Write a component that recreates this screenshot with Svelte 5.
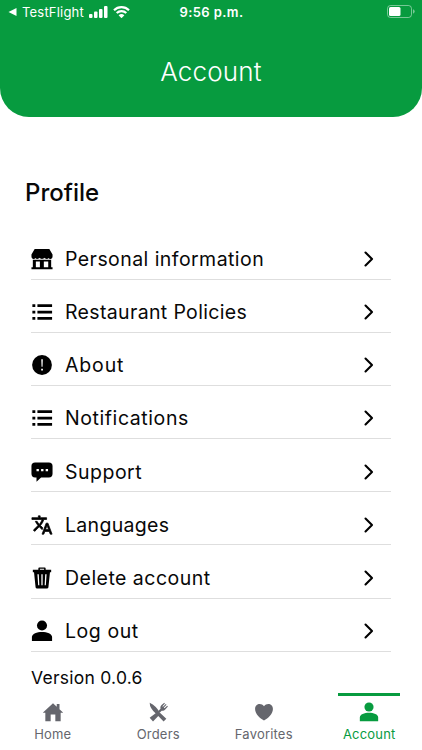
<script>
	let items = [
		{ label: "Personal information", icon: "store", spacing: 0.44 },
		{ label: "Restaurant Policies", icon: "list", spacing: 0.35 },
		{ label: "About", icon: "alert", spacing: 0.85 },
		{ label: "Notifications", icon: "list", spacing: 0.58 },
		{ label: "Support", icon: "chat", spacing: 0.5 },
		{ label: "Languages", icon: "translate", spacing: 0.3 },
		{ label: "Delete account", icon: "trash", spacing: 0.47 },
		{ label: "Log out", icon: "person", spacing: 0.56 }
	];

	let tabs = [
		{ label: "Home", icon: "home" },
		{ label: "Orders", icon: "orders" },
		{ label: "Favorites", icon: "heart" },
		{ label: "Account", icon: "person" }
	];

	let active = "Account";
</script>

{#snippet icon(name)}
	<svg viewBox="0 0 24 24" fill="currentColor">
		{#if name == "store"}
			<path d="M4 1h16l3.500 6v2.200c0 1.400-1 2.800-2.200 2.800-1 0-1.600-.5-2-1.200-.5.8-1.300 1.200-2.200 1.200-1.100 0-1.900-.5-2.400-1.300-.5.8-1.400 1.300-2.700 1.300s-2.200-.5-2.700-1.300c-.5.8-1.300 1.300-2.400 1.300-.9 0-1.700-.4-2.200-1.200-.4.7-1 1.200-2 1.200C1.500 12 .5 10.600.5 9.200V7z" />
			<path fill-rule="evenodd" d="M2 12.700h20V21h1.500v2.300H.5V21H2zM5.300 14.800V21h4.400v-6.200zm8.700 0V21h4.800v-6.200z" />
		{:else if name == "list"}
			<path d="M1.500 3.500h3.200v3H1.500zM7 3.500h16v3H7zM1.500 10.500h3.200v3H1.500zM7 10.500h16v3H7zM1.500 17.500h3.200v3H1.500zM7 17.500h16v3H7z" />
		{:else if name == "alert"}
			<circle cx="12" cy="12" r="10.800" />
			<path fill="#fff" d="M11.200 5.800h1.700l-.3 8h-1.100zM11.100 16h1.900v1.900h-1.900z" />
		{:else if name == "chat"}
			<path fill-rule="evenodd" d="M4.500 1.500h15A4 4 0 0 1 23.500 5.500V14a4 4 0 0 1-4 4H11l-5 4.700V18H4.500a4 4 0 0 1-4-4V5.500a4 4 0 0 1 4-4zM6 8.700v2.600h2.600V8.700zm5 0v2.600h2.600V8.700zm5 0v2.600h2.600V8.700z" />
		{:else if name == "translate"}
			<path d="M12.870 15.070l-2.540-2.510.030-.030A17.520 17.520 0 0 0 14.070 6H17V4h-7V2H8v2H1v2h11.170C11.500 7.920 10.440 9.750 9 11.350 8.070 10.320 7.300 9.190 6.690 8h-2c.73 1.630 1.730 3.170 2.980 4.560l-5.090 5.020L4 19l5-5 3.110 3.110zM18.500 10h-2L12 22h2l1.120-3h4.750L21 22h2zm-2.620 7l1.620-4.330L19.120 17z" stroke="currentColor" stroke-width=".8" />
		{:else if name == "trash"}
			<path fill-rule="evenodd" d="M8 3V1.500Q8 .5 9 .5h6q1 0 1 1V3h6v2.800h-1.300L19 22q-.1 1.500-1.700 1.500H6.700Q5.100 23.500 5 22L3.300 5.800H2V3zm1.700 0h4.600V2H9.700zM7 8l.8 12h1.300L8.500 8zm4.300 0v12h1.400V8zm4.200 0-.6 12h1.300L17 8z" />
		{:else if name == "person"}
			<circle cx="12" cy="6" r="5.500" />
			<path d="M1 23v-4.500C1 15 6.500 13 12 13s11 2 11 5.500V23z" />
		{:else if name == "home"}
			<path d="M12 1.500l4.500 4.200V2.500h3.300v6.300L24.500 13h-3.300v10h-6.400v-8H9.200v8H2.800V13H-.5z" />
		{:else if name == "orders"}
			<path d="M2 1q8 4 12 11.500l8 7.500-3.300 3.500L10 14.500Q2 8 2 1z" />
			<path d="M2 19l8.300-6.500 3.200 3.200L6 23.500z" />
			<path d="M12 11l3-2.800c-.4-2 .2-3.500 1.300-4.500L19.500 1l.8.700-3 3.300.7.700 3.400-3.200.8.800L19 6.700l.8.700L23 4.500l.9.800-3.500 4c-1.400 1.400-2.600 1.500-4 1.200L14 13z" />
		{:else if name == "heart"}
			<path d="M12 22.300C7 19 1.300 14.500 1.300 8.300 1.300 1.600 9 .5 12 5.200 15 .5 22.700 1.600 22.700 8.300c0 6.200-5.700 10.700-10.700 14z" />
		{/if}
	</svg>
{/snippet}

<main>
	<header>
		<div class="status">
			<div class="carrier">
				<svg class="back" viewBox="0 0 8 8"><path d="M8 0v8L0 4z" /></svg>
				<span>TestFlight</span>
				<svg class="signal" viewBox="0 0 19 12">
					<rect x="0" y="8" width="3.500" height="4" rx="1" />
					<rect x="5" y="5.500" width="3.500" height="6.500" rx="1" />
					<rect x="10" y="3" width="3.500" height="9" rx="1" />
					<rect x="15" y="0" width="3.500" height="12" rx="1" />
				</svg>
				<svg class="wifi" viewBox="0 0 17 12">
					<path d="M1 4.200a10.800 10.800 0 0 1 15 0M3.700 7a7 7 0 0 1 9.600 0" />
					<path class="dot" d="M5.600 9.300a4.300 4.300 0 0 1 5.800 0L8.500 12.200z" />
				</svg>
			</div>
			<div class="time">9:56 p.m.</div>
			<div class="power">
				<svg viewBox="0 0 28 13">
					<rect class="shell" x=".5" y=".5" width="24" height="12" rx="3" />
					<rect x="2" y="2" width="11.500" height="9" rx="1.500" />
					<path class="tip" d="M26 4.300q1.700.6 1.700 2.200T26 8.700z" />
				</svg>
			</div>
		</div>
		<h1>Account</h1>
	</header>

	<section>
		<h2>Profile</h2>
		<ul>
			{#each items as item}
				<li>
					<span class="icon">{@render icon(item.icon)}</span>
					<span class="label" style="letter-spacing: {item.spacing}px">{item.label}</span>
					<svg class="chevron" viewBox="0 0 10 16"><path d="M1.500 1.500 8 8l-6.500 6.500" /></svg>
				</li>
			{/each}
		</ul>
		<p>Version 0.0.6</p>
	</section>

	<nav>
		{#each tabs as tab}
			<div class="tab" class:active={tab.label == active}>
				<span class="tab-icon">{@render icon(tab.icon)}</span>
				<span>{tab.label}</span>
			</div>
		{/each}
	</nav>
</main>

<style>
	:global(body) {
		background: white;
	}

	main {
		display: flex;
		flex-direction: column;
		height: 750px;
		overflow: hidden;
		font-family: Inter, "Liberation Sans", sans-serif;
		color: #080808;
	}

	svg {
		display: block;
		width: 100%;
		height: 100%;
	}

	header {
		flex: none;
		height: 117px;
		border-radius: 0 0 29px 29px;
		background: #079b3f;
		color: white;
	}

	.status {
		display: grid;
		grid-template-columns: 1fr auto 1fr;
		align-items: center;
		height: 23px;
		padding: 0 7px 0 8px;
		fill: white;
	}

	.carrier {
		display: flex;
		align-items: center;
		font-size: 13px;
		letter-spacing: 0.2px;
	}

	.back {
		width: 9px;
		height: 8px;
		margin-right: 5px;
	}

	.signal {
		width: 19px;
		height: 12px;
		margin-left: 5px;
	}

	.wifi {
		width: 17px;
		height: 12px;
		margin-left: 5px;
	}

	.wifi path {
		fill: none;
		stroke: white;
		stroke-width: 2.2;
	}

	.wifi .dot {
		fill: white;
		stroke: none;
	}

	.time {
		font-size: 13px;
		font-weight: 600;
		letter-spacing: 0.4px;
	}

	.power svg {
		width: 28px;
		height: 13px;
		margin-left: auto;
	}

	.power .shell {
		fill: none;
		stroke: rgba(255, 255, 255, 0.45);
	}

	.power .tip {
		fill: rgba(255, 255, 255, 0.45);
	}

	h1 {
		margin: 33px 0 0;
		text-align: center;
		font-size: 26px;
		line-height: 32px;
		font-weight: 300;
		letter-spacing: 0.2px;
	}

	section {
		flex: 1;
		min-height: 0;
		padding: 61px 31px 0;
	}

	h2 {
		margin: 0 0 0 -6px;
		font-size: 24px;
		line-height: 30px;
		font-weight: 500;
	}

	ul {
		margin: 18.700px 0 0;
		padding: 0;
		list-style: none;
	}

	li {
		display: flex;
		align-items: center;
		box-sizing: border-box;
		height: 53.140px;
		padding: 12.500px 17px 0 0;
		border-bottom: 1px solid #dedede;
	}

	.icon {
		width: 22px;
		height: 22px;
		margin-right: 12px;
		color: black;
	}

	.label {
		flex: 1;
		font-size: 19.500px;
		line-height: 26px;
	}

	.chevron {
		width: 10px;
		height: 16px;
	}

	.chevron path {
		fill: none;
		stroke: black;
		stroke-width: 2.1;
		stroke-linecap: round;
		stroke-linejoin: round;
	}

	p {
		margin: 14px 0 0;
		font-size: 17.500px;
		line-height: 24px;
		letter-spacing: 0.25px;
	}

	nav {
		display: grid;
		grid-template-columns: repeat(4, 1fr);
		flex: none;
		height: 57px;
	}

	.tab {
		display: flex;
		flex-direction: column;
		align-items: center;
		justify-self: center;
		box-sizing: border-box;
		min-width: 62px;
		padding-top: 6px;
		border-top: 3px solid transparent;
		font-size: 13px;
		line-height: 18px;
		letter-spacing: 0.2px;
		color: #65666d;
	}

	.active {
		border-color: #079b3f;
		color: #079b3f;
	}

	.tab-icon {
		width: 20px;
		height: 20px;
		margin-bottom: 3px;
	}
</style>
